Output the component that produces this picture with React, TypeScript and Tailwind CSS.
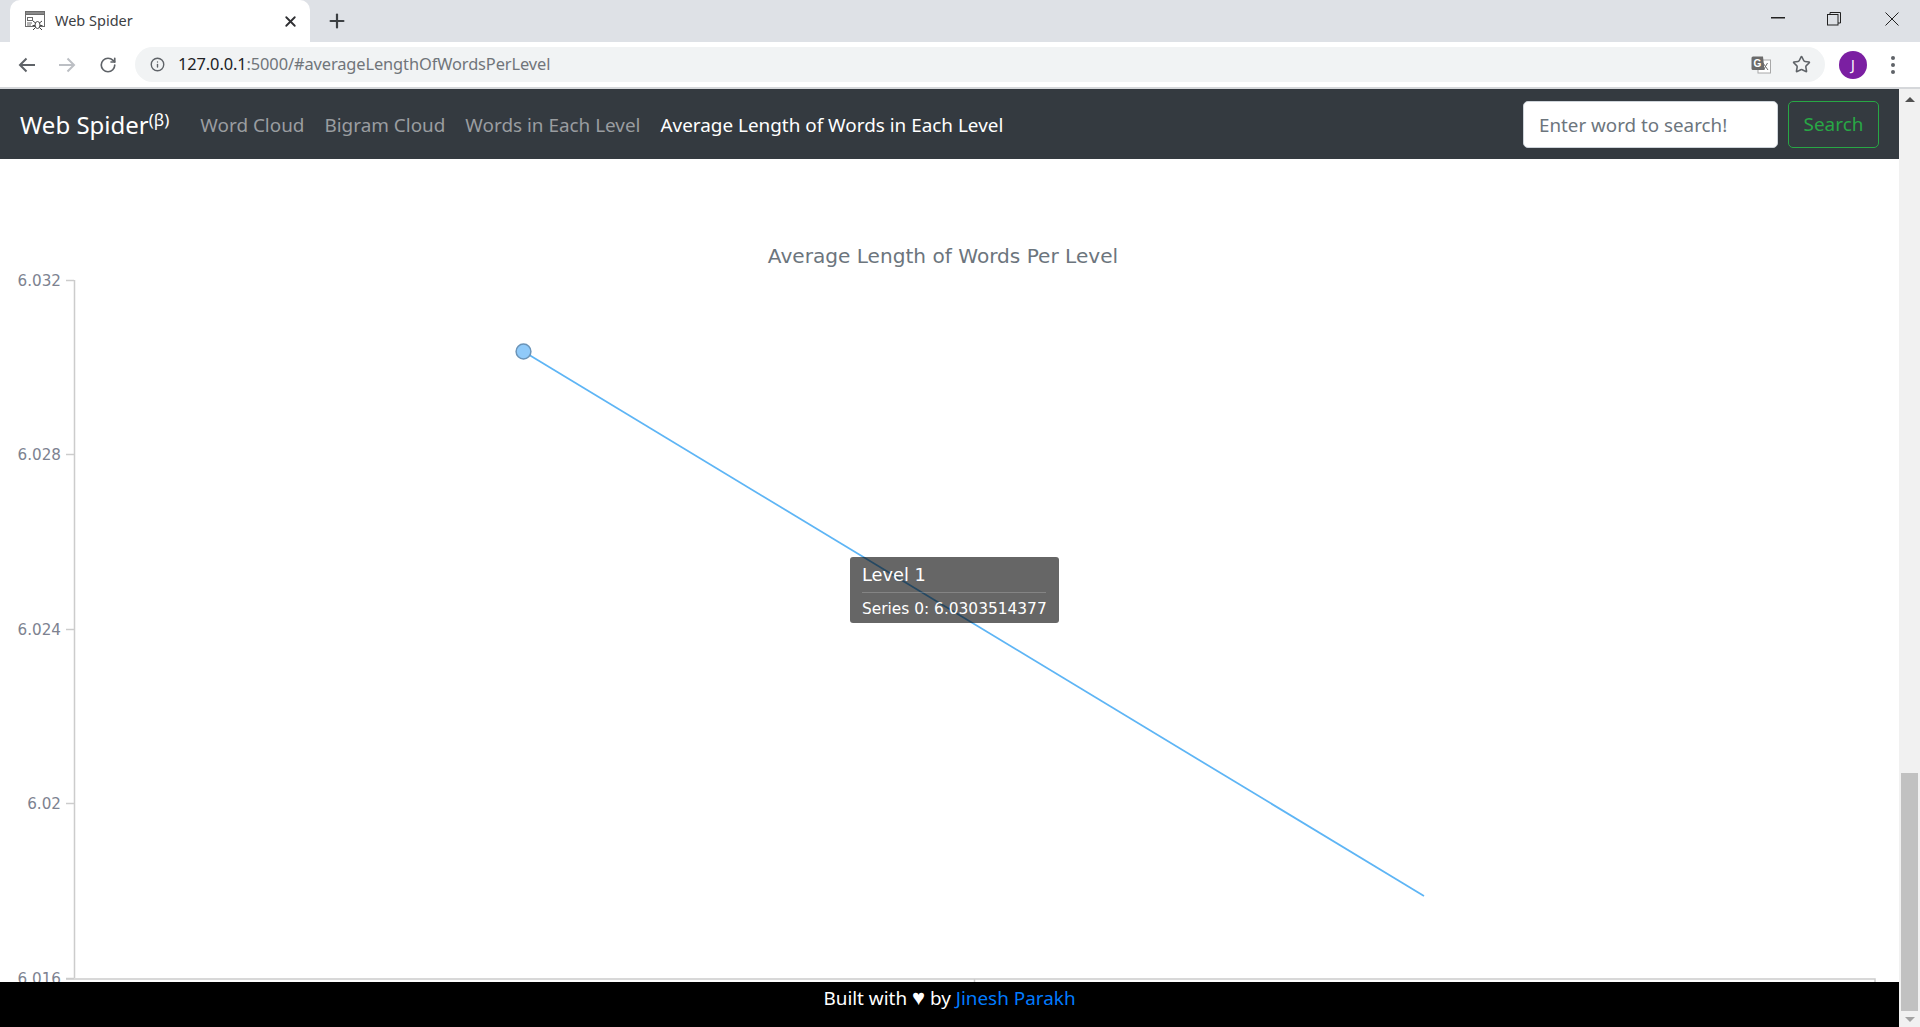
import { Info, Plus, RotateCw, Star, X } from 'lucide-react';

const navLinks = ['Word Cloud', 'Bigram Cloud', 'Words in Each Level'];

const yTicks = [
  { label: '6.032', y: 121 },
  { label: '6.028', y: 295 },
  { label: '6.024', y: 470 },
  { label: '6.02', y: 644 },
  { label: '6.016', y: 819 },
];

function Favicon() {
  return (
    <svg width="20" height="20" viewBox="0 0 20 20" fill="none" stroke="#6b6b6b" strokeWidth="1">
      <rect x="0.5" y="0.5" width="19" height="15" fill="#fff" />
      <rect x="0.5" y="0.5" width="19" height="3" fill="#8a8a8a" />
      <rect x="2.5" y="6.5" width="5" height="3" />
      <path d="M2 12h5M2 14h4" />
      <ellipse cx="12.5" cy="14" rx="2.5" ry="3.5" fill="#fff" stroke="#444" />
      <path d="M8 10l2.5 2M17 10l-2.5 2M7.5 14.5h2.5M15 14.5h2.5M8 19l2.5-2.5M17 19l-2.5-2.5" stroke="#444" />
    </svg>
  );
}

function TabStrip() {
  return (
    <div className="flex h-[42px] shrink-0 bg-[#dee1e6]">
      <div className="ml-[10px] mt-auto flex h-[42px] w-[300px] items-center rounded-t-[10px] bg-white pl-[15px] pr-[11px]">
        <Favicon />
        <span className="ml-[10px] flex-1 text-[14.5px] text-[#3c4043]">Web Spider</span>
        <X size={17} strokeWidth={2.6} className="text-[#2f3033]" />
      </div>
      <Plus size={22} strokeWidth={2.4} className="ml-[16px] mt-[10px] text-[#3c4043]" />
      <div className="ml-auto flex h-[37px] items-center pr-[21px]">
        <svg width="14" height="2" className="mr-[42px] translate-y-[-1px]">
          <rect width="14" height="1.5" fill="#222" />
        </svg>
        <svg width="14" height="14" viewBox="0 0 14 14" fill="none" stroke="#222" className="mr-[44px]">
          <rect x="0.5" y="2.5" width="10.5" height="10.5" />
          <path d="M3 2.5V0.5h10.5V11H11" />
        </svg>
        <svg width="14" height="14" viewBox="0 0 14 14" fill="none" stroke="#222">
          <path d="M0.5 0.5l13 13M13.5 0.5l-13 13" />
        </svg>
      </div>
    </div>
  );
}

function TranslateIcon() {
  return (
    <svg width="20" height="18" viewBox="0 0 20 18">
      <rect x="7" y="4" width="12.5" height="13" fill="#fff" stroke="#a8a8a8" />
      <path d="M2 0.5h10l1.5 13.5H2a1.5 1.5 0 0 1-1.5-1.5V2A1.5 1.5 0 0 1 2 0.5z" fill="#6a6a6a" />
      <text x="2.5" y="11" fontSize="10" fontWeight="700" fill="#fff" fontFamily="Liberation Sans, sans-serif">
        G
      </text>
      <path d="M12 7l5 7M16.5 7l-4 7" stroke="#6a6a6a" fill="none" />
    </svg>
  );
}

function Toolbar() {
  return (
    <div className="flex h-[45px] shrink-0 items-center bg-white">
      <svg width="18" height="16" viewBox="0 0 18 16" fill="none" stroke="#5f6368" strokeWidth="2" className="ml-[18px]">
        <path d="M17 8H2M8.5 1.5L2 8l6.5 6.5" />
      </svg>
      <svg width="18" height="16" viewBox="0 0 18 16" fill="none" stroke="#bcbfc4" strokeWidth="2" className="ml-[22px]">
        <path d="M1 8h15M9.5 1.5L16 8l-6.5 6.5" />
      </svg>
      <RotateCw size={18} strokeWidth={2.2} className="ml-[23px] text-[#5f6368]" />
      <div className="ml-[18px] flex h-[35px] w-[1690px] items-center rounded-full bg-[#f1f3f4] pl-[15px]">
        <Info size={15} strokeWidth={2.2} className="text-[#5f6368]" />
        <span className="ml-[13px] text-[16.4px] tracking-[-0.1px] text-[#202124]">
          127.0.0.1<span className="text-[#70757a]">:5000/#averageLengthOfWordsPerLevel</span>
        </span>
        <div className="ml-auto flex items-center pr-[14px]">
          <TranslateIcon />
          <Star size={19} strokeWidth={2} className="ml-[21px] text-[#5f6368]" />
        </div>
      </div>
      <div className="ml-[14px] flex h-[28px] w-[28px] items-center justify-center rounded-full bg-[#7b1fa2] text-[14px] text-white">
        J
      </div>
      <div className="ml-[24px] flex flex-col gap-[3px]">
        <span className="h-[4px] w-[4px] rounded-full bg-[#5f6368]" />
        <span className="h-[4px] w-[4px] rounded-full bg-[#5f6368]" />
        <span className="h-[4px] w-[4px] rounded-full bg-[#5f6368]" />
      </div>
    </div>
  );
}

function Navbar() {
  return (
    <nav className="flex h-[70px] shrink-0 items-center bg-[#343a40] px-[20px]">
      <a className="translate-y-px text-[24px] text-white">
        Web Spider<sup className="text-[17px]">(β)</sup>
      </a>
      <div className="ml-[31px] flex translate-y-px items-center gap-[20px] text-[18.9px]">
        {navLinks.map((link) => (
          <a key={link} className="text-[#9a9da0]">
            {link}
          </a>
        ))}
        <a className="text-white">Average Length of Words in Each Level</a>
      </div>
      <form className="ml-auto flex items-center gap-[10px]">
        <input
          placeholder="Enter word to search!"
          className="h-[47px] w-[255px] rounded-[5px] border border-[#ced4da] bg-white pl-[15px] pr-[16px] pt-[2px] text-[18.8px] placeholder:text-[#6c757d]"
        />
        <button type="button" className="h-[47px] w-[91px] rounded-[5px] border border-[#28a745] pt-px text-[18.9px] text-[#28a745]">
          Search
        </button>
      </form>
    </nav>
  );
}

function Chart() {
  return (
    <div className="relative min-h-0 flex-1 overflow-hidden bg-white">
      <svg viewBox="0 0 1899 823" className="block h-full w-full" fontFamily="'DejaVu Sans', Verdana, sans-serif">
        <text x="943" y="104" textAnchor="middle" fontSize="20.1" fill="#6c757d">
          Average Length of Words Per Level
        </text>
        <g stroke="#cccccc" strokeWidth="1.5" fill="none">
          <path d="M74.5 121v698" />
          <path d="M66 820h1809v3" />
          <path d="M974.5 820v3" />
          {yTicks.map((t) => (
            <path key={t.label} d={`M66 ${t.y + 0.5}h8`} />
          ))}
        </g>
        {yTicks.map((t) => (
          <text key={t.label} x="61" y={t.y + 6} textAnchor="end" fontSize="15.2" fill="#7d8290">
            {t.label}
          </text>
        ))}
        <path d="M523.5 192.5L1424 737" stroke="#5eb5f5" strokeWidth="1.75" fill="none" />
        <circle cx="523.5" cy="192.5" r="7.4" fill="#90caf9" stroke="#6b94b8" strokeWidth="1.5" />
      </svg>
      <div className="absolute left-[850px] top-[398px] h-[66px] w-[209px] rounded-[3px] bg-black/60 px-[12px] pt-[6px] font-['DejaVu_Sans',sans-serif] text-white">
        <div className="text-[17.8px] leading-[23px]">Level 1</div>
        <div className="mt-[6px] h-px w-[184px] bg-white/20" />
        <div className="mt-[8px] whitespace-nowrap text-[15.4px] leading-[17px]">Series 0: 6.0303514377</div>
      </div>
    </div>
  );
}

function Footer() {
  return (
    <footer className="flex h-[45px] shrink-0 items-start justify-center bg-black pt-[3px] text-[18.9px] leading-[27px] text-white">
      <span>
        Built with <span className="text-[22px] leading-[20px]">♥</span> by <a className="text-[#007bff]">Jinesh Parakh</a>
      </span>
    </footer>
  );
}

function Scrollbar() {
  return (
    <div className="flex w-[21px] shrink-0 flex-col items-center bg-[#f1f1f1] pt-[8px]">
      <span className="h-0 w-0 border-x-[5px] border-b-[5px] border-x-transparent border-b-[#505050]" />
      <div className="mt-auto h-[238px] w-[17px] bg-[#c1c1c1]" />
      <span className="mb-[5px] mt-[6px] h-0 w-0 border-x-[5px] border-t-[5px] border-x-transparent border-t-[#a3a3a3]" />
    </div>
  );
}

export default function App() {
  return (
    <div className="flex h-screen flex-col overflow-hidden bg-white font-['Noto_Sans',sans-serif]">
      <TabStrip />
      <Toolbar />
      <div className="h-[2px] shrink-0 bg-[#d5d7da]" />
      <div className="flex min-h-0 flex-1">
        <div className="flex min-w-0 flex-1 flex-col">
          <Navbar />
          <Chart />
          <Footer />
        </div>
        <Scrollbar />
      </div>
    </div>
  );
}
